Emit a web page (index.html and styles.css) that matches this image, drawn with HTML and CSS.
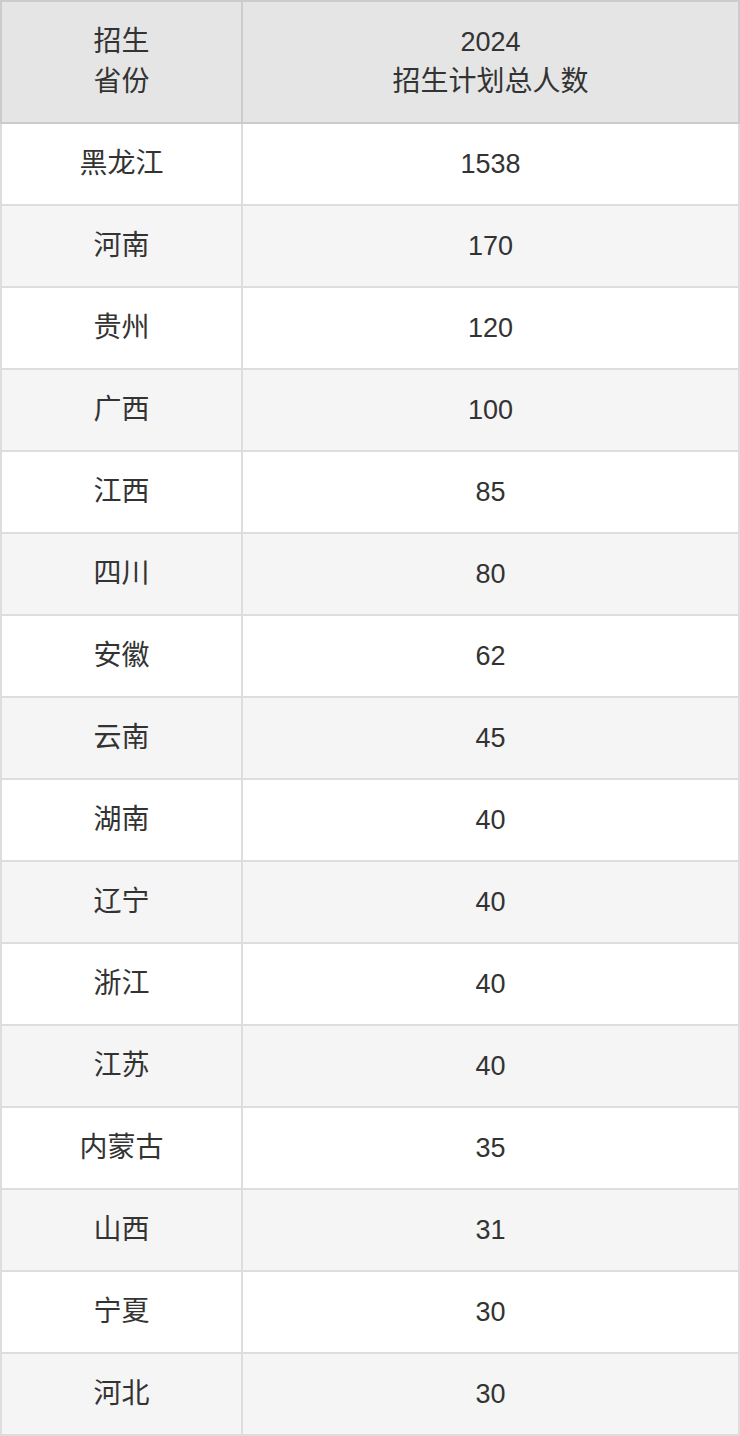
FILE: index.html
```html
<!DOCTYPE html>
<html lang="zh">
<head>
<meta charset="utf-8">
<link rel="stylesheet" href="styles.css">
</head>
<body>
<table class="plan">
  <thead>
    <tr><th class="col-prov">招生<br>省份</th><th><span class="num">2024</span><br>招生计划总人数</th></tr>
  </thead>
  <tbody>
    <tr><td>黑龙江</td><td>1538</td></tr>
    <tr><td>河南</td><td>170</td></tr>
    <tr><td>贵州</td><td>120</td></tr>
    <tr><td>广西</td><td>100</td></tr>
    <tr><td>江西</td><td>85</td></tr>
    <tr><td>四川</td><td>80</td></tr>
    <tr><td>安徽</td><td>62</td></tr>
    <tr><td>云南</td><td>45</td></tr>
    <tr><td>湖南</td><td>40</td></tr>
    <tr><td>辽宁</td><td>40</td></tr>
    <tr><td>浙江</td><td>40</td></tr>
    <tr><td>江苏</td><td>40</td></tr>
    <tr><td>内蒙古</td><td>35</td></tr>
    <tr><td>山西</td><td>31</td></tr>
    <tr><td>宁夏</td><td>30</td></tr>
    <tr><td>河北</td><td>30</td></tr>
  </tbody>
</table>
</body>
</html>
```

FILE: styles.css
```css
html, body {
  margin: 0;
  padding: 0;
  background: #ffffff;
}
.plan {
  width: 740px;
  border-collapse: collapse;
  table-layout: fixed;
  font-family: "Liberation Sans", "Noto Sans CJK SC", sans-serif;
  font-size: 27px;
  color: #333333;
}
.plan th, .plan td {
  border: 2px solid #dddddd;
  text-align: center;
  vertical-align: middle;
  padding: 0;
}
.plan th {
  background: #e5e5e5;
  border-color: #cccccc;
  font-weight: normal;
  font-size: 28px;
  height: 120px;
  line-height: 40px;
}
.plan th .num {
  font-size: 27px;
}
.plan .col-prov {
  width: 239px;
}
.plan td {
  height: 80px;
  line-height: 40px;
}
.plan td:first-child {
  font-size: 28px;
}
.plan tbody tr:nth-child(even) td {
  background: #f5f5f5;
}
```
